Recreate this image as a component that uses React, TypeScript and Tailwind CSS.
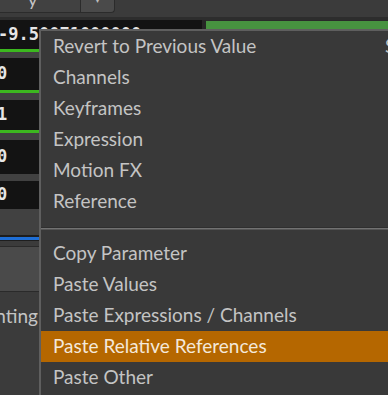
import React from "react";

const font = { fontFamily: "Lato, 'Noto Sans', sans-serif" };
const mono = { fontFamily: "'DejaVu Sans Mono', monospace" };

type Item = { label: string; shortcut?: string; active?: boolean };

const top: Item[] = [
  { label: "Revert to Previous Value", shortcut: "Shift+Ctrl+Z" },
  { label: "Channels" },
  { label: "Keyframes" },
  { label: "Expression" },
  { label: "Motion FX" },
  { label: "Reference" },
];

const bottom: Item[] = [
  { label: "Copy Parameter" },
  { label: "Paste Values" },
  { label: "Paste Expressions / Channels" },
  { label: "Paste Relative References", active: true },
  { label: "Paste Other" },
];

const MenuRow = ({ label, shortcut, active }: Item) => (
  <div
    className={`flex items-center h-[31px] pl-3 whitespace-nowrap text-[19px] ${
      active ? "bg-[#b56700] text-[#f4e8da]" : "text-[#c4c4c4]"
    }`}
  >
    <span className="w-[332px] shrink-0">{label}</span>
    {shortcut && <span className="text-[#c4c4c4]">{shortcut}</span>}
  </div>
);

// one numeric field row on the left of the parameter pane
const Field = ({ value, h, line }: { value: string; h: string; line: boolean }) => (
  <div className="flex flex-col">
    <div className={`${h} bg-[#131313] flex items-center text-[17px] text-[#e6e6e6] font-bold`} style={mono}>
      <span className="-ml-[3px]">{value}</span>
    </div>
    {line && <div className="h-[3px] bg-[#3cb81f]" />}
  </div>
);

export default function App() {
  return (
    <div className="relative w-[388px] h-[395px] overflow-hidden bg-[#3b3b3b]" style={font}>
      {/* parameter pane behind the menu */}
      <div className="flex flex-col">
        <div className="flex h-[13px]">
          <div className="w-[80px] bg-[#414141] border-b border-[#2b2b2b] relative overflow-hidden">
            <span className="absolute left-[28px] -top-[14px] text-[18px] text-[#c6c6c6]">y</span>
          </div>
          <div className="w-[35px] bg-[#4a4a4a] border-l border-b border-r border-[#2b2b2b] rounded-br-[4px] flex justify-center overflow-hidden">
            <span className="text-[10px] leading-none -mt-[6px] text-[#bdbdbd]">▾</span>
          </div>
        </div>
        <div className="h-[4px]" />
        <div className="h-[3px] bg-[#2d2d2d]" />
        <div className="flex h-[29px]">
          <div className="w-[202px] bg-[#131313] flex items-center text-[17px] text-[#e6e6e6] font-bold overflow-hidden whitespace-nowrap" style={mono}>
            <span className="-ml-[2px]">-9.50071000000</span>
          </div>
          <div className="w-[4px] bg-[#262626]" />
          <div className="flex-1 bg-[#479340] border-t border-[#2a2a2a] text-[#f0f0f0] text-[17px] pl-[5px] pt-[6px]">0</div>
        </div>
        <div className="h-[3px] bg-[#3cb81f]" />
        <div className="h-[6px] bg-[#414141]" />
        <Field value="0" h="h-[32px]" line />
        <div className="h-[7px] bg-[#414141]" />
        <Field value="1" h="h-[30px]" line />
        <div className="h-[7px] bg-[#414141]" />
        <Field value="0" h="h-[34px]" line={false} />
        <div className="h-[7px] bg-[#414141]" />
        <Field value="0" h="h-[28px]" line={false} />
        <div className="h-[26px] bg-[#414141]" />
        <div className="h-[2px] bg-[#1e1e1e]" />
        <div className="h-[3px] bg-[#1f6fd6]" />
        <div className="h-px bg-[#1e1e1e]" />
        <div className="h-[5px]" />
        <div className="h-[46px] bg-[#4a4a4a] border-y border-[#2a2a2a]" />
        <div className="flex pt-[10px]">
          <div className="w-[38px] overflow-hidden flex justify-end whitespace-nowrap text-[19px] text-[#c4c4c4]">
            Painting
          </div>
        </div>
      </div>

      {/* context menu */}
      <div className="absolute left-[39px] top-[29px] w-[400px] h-[400px] bg-[#393939] border-l-2 border-t-2 border-[#5f5f5f]">
        {top.map((it) => (
          <MenuRow key={it.label} {...it} />
        ))}
        <div className="pt-[10px] pb-[8px]">
          <div className="h-px bg-[#2f2f2f]" />
          <div className="h-px bg-[#727272]" />
          <div className="h-px bg-[#555555]" />
        </div>
        {bottom.map((it) => (
          <MenuRow key={it.label} {...it} />
        ))}
      </div>
    </div>
  );
}
